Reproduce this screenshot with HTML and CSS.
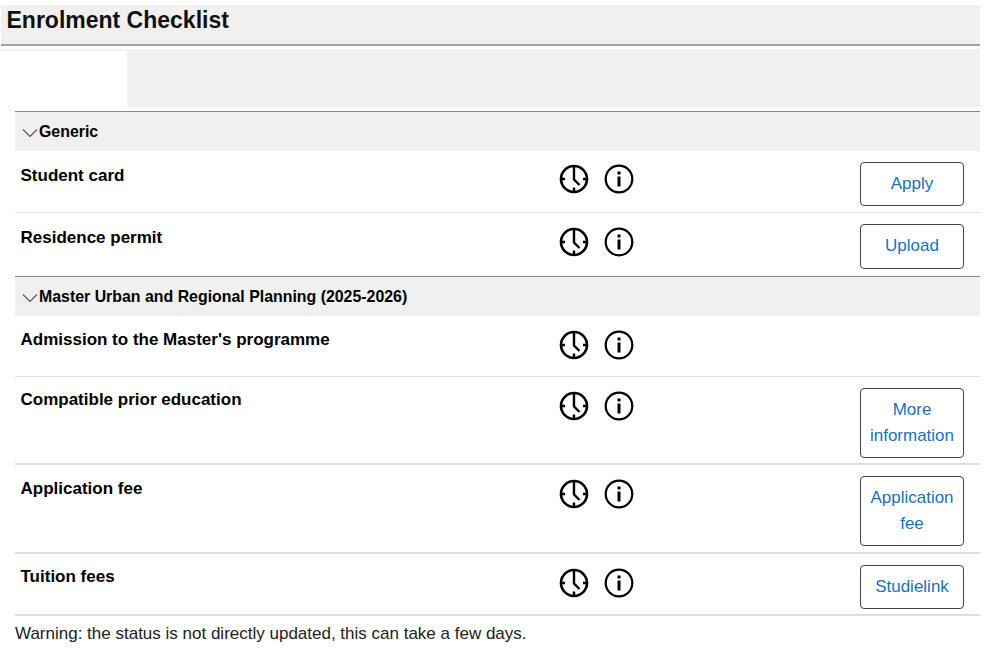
FILE: index.html
```html
<!DOCTYPE html>
<html lang="en">
<head>
<meta charset="utf-8">
<title>Enrolment Checklist</title>
<link rel="stylesheet" href="styles.css">
</head>
<body>
<svg class="defs" width="0" height="0" aria-hidden="true">
  <symbol id="clock" viewBox="0 0 30 30">
    <circle cx="15" cy="15" r="13" fill="none" stroke="#000" stroke-width="2.600"/>
    <path d="M15 23.500v4M2.500 15h3.500M24 15h3.500" stroke="#000" stroke-width="2.400" fill="none"/>
    <path d="M15 2.500v13l5.500 5.500" stroke="#000" stroke-width="2.400" fill="none"/>
  </symbol>
  <symbol id="info" viewBox="0 0 30 30">
    <circle cx="15" cy="15" r="13.300" fill="none" stroke="#000" stroke-width="2.200"/>
    <rect x="13.500" y="7.500" width="3" height="3" fill="#000"/>
    <rect x="13.500" y="12.500" width="3" height="10" fill="#000"/>
  </symbol>
  <symbol id="chev" viewBox="0 0 16 10">
    <path d="M1 1.500l7 7 7-7" fill="none" stroke="#555" stroke-width="1.100"/>
  </symbol>
</svg>
<header class="title-bar"><h1>Enrolment Checklist</h1></header>
<div class="tabs"><div class="tab-active"></div><div class="tab-rest"></div></div>
<main class="checklist">
  <section class="group">
    <h2 class="group-head"><svg class="chev"><use href="#chev"/></svg>Generic</h2>
    <div class="row r1">
      <div class="name">Student card</div>
      <div class="icons"><svg class="ic"><use href="#clock"/></svg><svg class="ic"><use href="#info"/></svg></div>
      <div class="act"><a class="btn" href="#">Apply</a></div>
    </div>
    <div class="row r2">
      <div class="name">Residence permit</div>
      <div class="icons"><svg class="ic"><use href="#clock"/></svg><svg class="ic"><use href="#info"/></svg></div>
      <div class="act"><a class="btn" href="#">Upload</a></div>
    </div>
  </section>
  <section class="group">
    <h2 class="group-head"><svg class="chev"><use href="#chev"/></svg>Master Urban and Regional Planning (2025-2026)</h2>
    <div class="row r3">
      <div class="name">Admission to the Master's programme</div>
      <div class="icons"><svg class="ic"><use href="#clock"/></svg><svg class="ic"><use href="#info"/></svg></div>
      <div class="act"></div>
    </div>
    <div class="row r4">
      <div class="name">Compatible prior education</div>
      <div class="icons"><svg class="ic"><use href="#clock"/></svg><svg class="ic"><use href="#info"/></svg></div>
      <div class="act"><a class="btn" href="#">More information</a></div>
    </div>
    <div class="row r4">
      <div class="name">Application fee</div>
      <div class="icons"><svg class="ic"><use href="#clock"/></svg><svg class="ic"><use href="#info"/></svg></div>
      <div class="act"><a class="btn" href="#">Application fee</a></div>
    </div>
    <div class="row r5">
      <div class="name">Tuition fees</div>
      <div class="icons"><svg class="ic"><use href="#clock"/></svg><svg class="ic"><use href="#info"/></svg></div>
      <div class="act"><a class="btn" href="#">Studielink</a></div>
    </div>
  </section>
  <p class="warning">Warning: the status is not directly updated, this can take a few days.</p>
</main>
</body>
</html>
```

FILE: styles.css
```css
* { box-sizing: border-box; }
html, body { margin: 0; padding: 0; }
body {
  width: 992px;
  height: 656px;
  overflow: hidden;
  padding-top: 5px;
  background: #fff;
  color: #000;
  font-family: "Liberation Sans", Arial, sans-serif;
}
.defs { display: block; height: 0; }
.title-bar {
  width: 979px;
  height: 41px;
  margin-left: 1px;
  background: #f1f0ef;
  border-bottom: 2px solid #a3a3a3;
}
.title-bar h1 {
  margin: 0;
  padding: 3px 0 0 5.500px;
  font-size: 23px;
  line-height: 24px;
  font-weight: 700;
  color: #111;
}
.tabs {
  display: flex;
  width: 979px;
  height: 58px;
  margin: 3px 0 0 1px;
  border-top: 2px solid #f0f0f0;
}
.tab-active { width: 126px; background: #fff; }
.tab-rest { flex: 1; background: #f0f0f0; }
.checklist { width: 965px; margin: 4px 0 0 15px; }
.group { border-top: 1px solid #8a8a8a; }
.group-head {
  display: flex;
  align-items: center;
  height: 38.500px;
  margin: 0;
  padding: 2px 0 0 7px;
  background: #f0f0f0;
  font-size: 15.900px;
  line-height: 20px;
  font-weight: 700;
  color: #000;
}
.chev { width: 16px; height: 10px; margin-right: 1px; margin-top: 1px; }
.row {
  display: flex;
  border-bottom: 1px solid #dedede;
}
.r1 { height: 62px; }
.r2 { height: 63.500px; border-bottom: none; }
.r3 { height: 61px; }
.r4 { height: 88.500px; border-bottom-width: 2px; }
.r5 { height: 62px; border-bottom-width: 2px; }
.name {
  width: 544px;
  padding: 13.500px 0 0 5.500px;
  font-size: 17px;
  line-height: 20px;
  font-weight: 700;
  color: #000;
}
.r1 .name, .r2 .name { padding-top: 15.500px; }
.r3 .name { padding-top: 14.500px; }
.icons { display: flex; gap: 15px; width: 301px; padding-top: 14px; }
.r1 .icons { padding-top: 13px; }
.ic { width: 30px; height: 30px; }
.act { width: 104px; padding-top: 11px; }
.btn {
  display: block;
  width: 104px;
  padding: 8px 5px;
  border: 1px solid #444;
  border-radius: 4px;
  background: #fff;
  color: #1a73ba;
  font-size: 17px;
  line-height: 26px;
  text-align: center;
  text-decoration: none;
}
.r2 .btn { padding-bottom: 9px; }
.warning {
  margin: 8px 0 0;
  font-size: 17px;
  line-height: 20px;
  color: #222;
}
```
